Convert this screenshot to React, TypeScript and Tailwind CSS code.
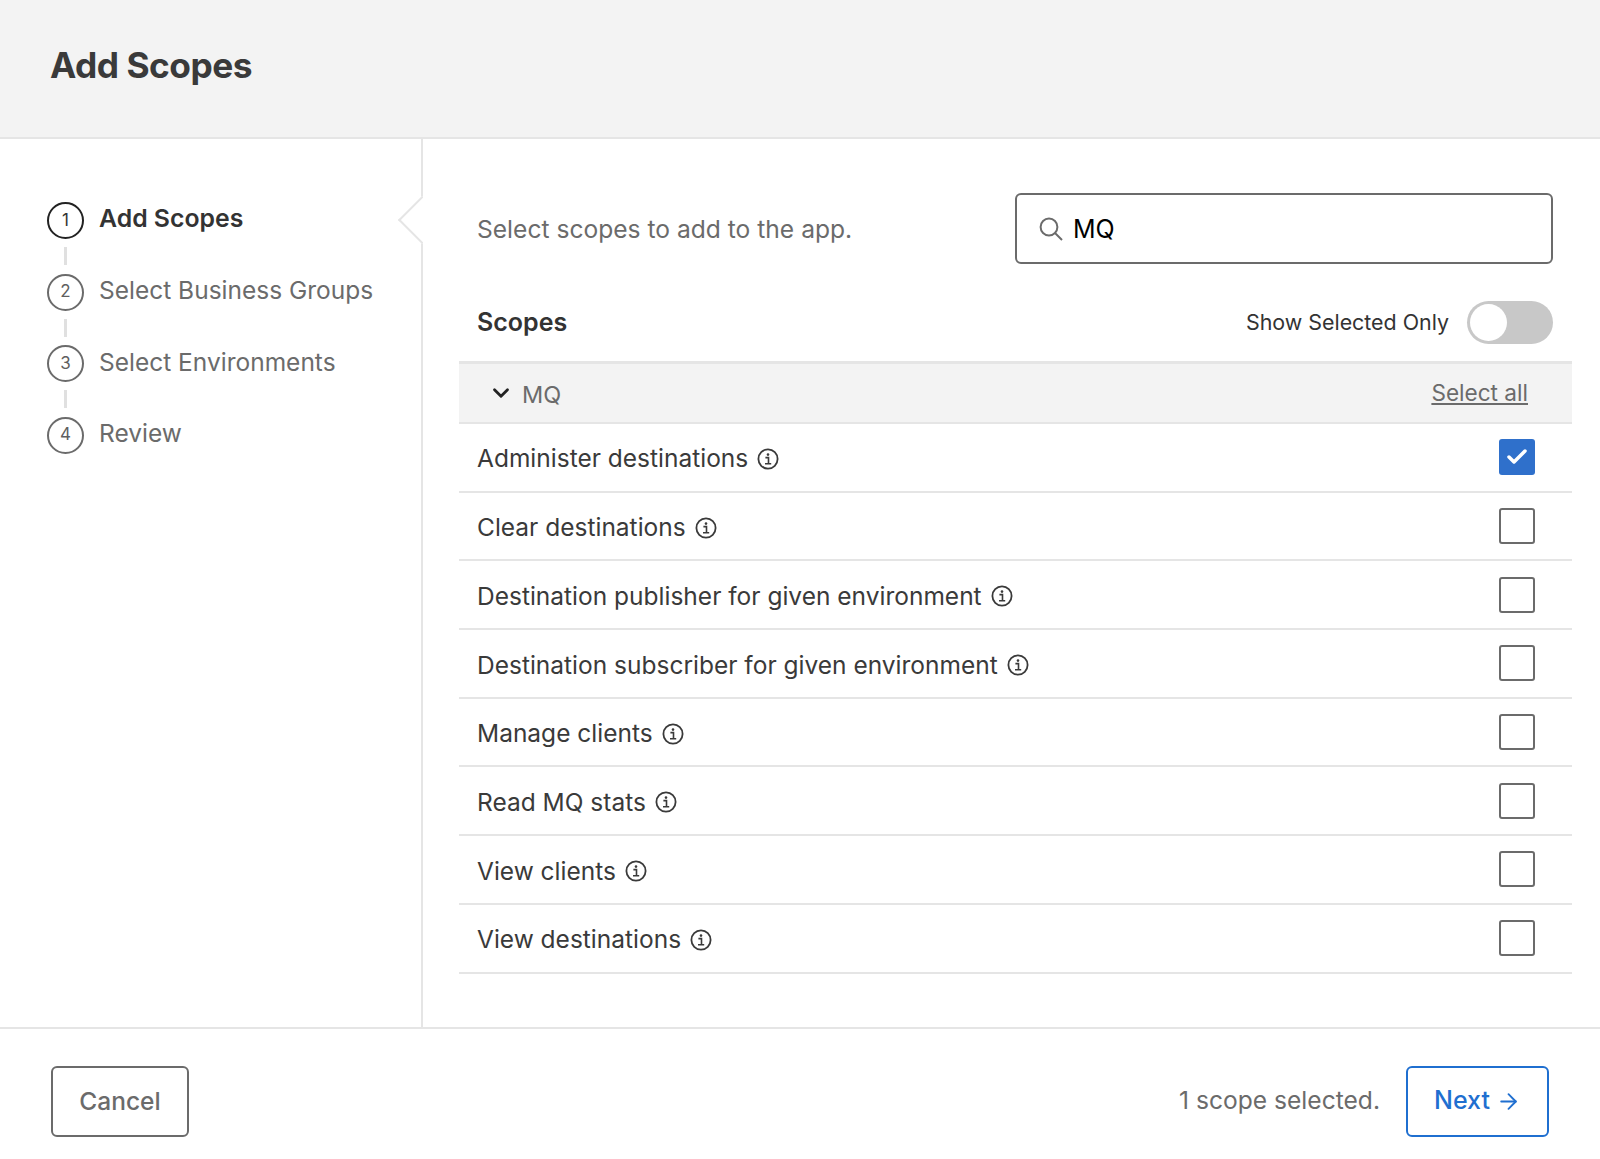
import React from 'react';
import { ChevronDown, ArrowRight, Check } from 'lucide-react';

const steps = [
  { n: 1, label: 'Add Scopes', active: true },
  { n: 2, label: 'Select Business Groups', active: false },
  { n: 3, label: 'Select Environments', active: false },
  { n: 4, label: 'Review', active: false }
];

const scopes = [
  { name: 'Administer destinations', checked: true },
  { name: 'Clear destinations', checked: false },
  { name: 'Destination publisher for given environment', checked: false },
  { name: 'Destination subscriber for given environment', checked: false },
  { name: 'Manage clients', checked: false },
  { name: 'Read MQ stats', checked: false },
  { name: 'View clients', checked: false },
  { name: 'View destinations', checked: false }
];

const InfoIcon = () => (
  <svg width="22" height="22" viewBox="0 0 22 22" fill="none" className="shrink-0 text-[#3a3a3a]">
    <circle cx="11" cy="11" r="9.6" stroke="currentColor" strokeWidth="1.8" />
    <circle cx="11" cy="6.6" r="1.3" fill="currentColor" />
    <path d="M8.4 9.6H11.5V15.4M8 15.7H14.2" stroke="currentColor" strokeWidth="1.6" />
  </svg>
);

const SearchIcon = () => (
  <svg width="24" height="24" viewBox="0 0 24 24" fill="none" className="shrink-0 text-[#6b6b6b]">
    <circle cx="10" cy="10" r="8.4" stroke="currentColor" strokeWidth="2" />
    <path d="M16 16L23 23" stroke="currentColor" strokeWidth="2" />
  </svg>
);

export default function App() {
  return (
    <div className="w-[1600px] h-[1159px] flex flex-col bg-white font-['Inter',sans-serif] overflow-hidden">
      <header className="h-[139px] shrink-0 bg-[#f3f3f3] border-b-2 border-[#e5e5e5] flex items-center pl-[50px] pb-[4px]">
        <h1 className="text-[35.3px] font-bold text-[#3a3a3a] tracking-[-0.5px]">Add Scopes</h1>
      </header>

      <div className="flex-1 flex min-h-0">
        {/* Steps */}
        <aside className="relative w-[423px] shrink-0 border-r-2 border-[#e5e5e5] pl-[47px] pt-[63px]">
          <div className="absolute right-[-2px] top-[57px] w-[26px] h-[48px] overflow-hidden">
            <div className="absolute left-[8px] top-[7px] w-[34px] h-[34px] rotate-45 bg-white border-l-2 border-b-2 border-[#e5e5e5]" />
          </div>
          {steps.map((step, i) => (
            <div key={step.n}>
              <div className="flex items-center gap-[15px] h-[37px]">
                <div
                  className={`w-[37px] h-[37px] rounded-full border-2 flex items-center justify-center text-[17px] ${
                    step.active ? 'border-[#222] text-[#333]' : 'border-[#6b6b6b] text-[#5f5f5f]'
                  }`}
                >
                  {step.n}
                </div>
                <span
                  className={
                    step.active
                      ? '-mt-[4px] text-[24.8px] font-semibold text-[#333]'
                      : '-mt-[3px] text-[24.5px] text-[#6b6b6b]'
                  }
                >
                  {step.label}
                </span>
              </div>
              {i < steps.length - 1 && (
                <div className="w-[3px] h-[18px] ml-[17px] my-[8.25px] bg-[#e0e0e0]" />
              )}
            </div>
          ))}
        </aside>

        {/* Scope picker */}
        <main className="flex-1 pl-[36px] pr-[28px] pt-[54px]">
          <div className="flex items-center justify-between pl-[18px] pr-[19px] h-[71px]">
            <span className="text-[24.6px] text-[#6b6b6b] mt-[1px]">Select scopes to add to the app.</span>
            <div className="w-[538px] h-[71px] border-2 border-[#6b6b6b] rounded-[6px] flex items-center pl-[22px] gap-[10px]">
              <SearchIcon />
              <span className="text-[25px] text-black mt-[2px]">MQ</span>
            </div>
          </div>

          <div className="flex items-center justify-between pl-[18px] pr-[19px] h-[43px] mt-[37px]">
            <span className="text-[25px] font-semibold text-[#333] mt-[1px]">Scopes</span>
            <div className="flex items-center gap-[18px]">
              <span className="text-[21.4px] text-[#333]">Show Selected Only</span>
              <div className="w-[86px] h-[43px] rounded-full bg-[#c8c8c8] flex items-center pl-[3px]">
                <div className="w-[37px] h-[37px] rounded-full bg-white" />
              </div>
            </div>
          </div>

          <div className="mt-[17px] h-[63px] bg-[#f3f3f3] border-t-[3px] border-b-2 border-[#e5e5e5] flex items-center justify-between pl-[29px] pr-[44px]">
            <div className="flex items-center gap-[8px]">
              <ChevronDown className="w-[26px] h-[26px] text-[#222]" strokeWidth={2.6} />
              <span className="text-[23.5px] text-[#6b6b6b] mt-[3px]">MQ</span>
            </div>
            <span className="text-[22.6px] text-[#6b6b6b] underline">Select all</span>
          </div>

          {scopes.map(scope => (
            <div
              key={scope.name}
              className="h-[68.7px] border-b-2 border-[#e5e5e5] flex items-center justify-between pl-[18px] pr-[37px]"
            >
              <div className="flex items-center gap-[9px] pt-[3px]">
                <span className="text-[24.5px] text-[#3a3a3a]">{scope.name}</span>
                <InfoIcon />
              </div>
              {scope.checked ? (
                <div className="w-[36px] h-[36px] rounded-[3px] bg-[#2f70cb] flex items-center justify-center">
                  <Check className="w-[24px] h-[24px] text-white" strokeWidth={3.5} />
                </div>
              ) : (
                <div className="w-[36px] h-[36px] rounded-[3px] border-2 border-[#6b6b6b]" />
              )}
            </div>
          ))}
        </main>
      </div>

      <footer className="h-[132px] shrink-0 border-t-2 border-[#e5e5e5] flex items-center justify-between pl-[51px] pr-[51px] pt-[14px]">
        <button className="w-[138px] h-[71px] border-2 border-[#6b6b6b] rounded-[6px] text-[24.5px] font-medium text-[#6b6b6b]">
          Cancel
        </button>
        <div className="flex items-center gap-[26px]">
          <span className="text-[24.6px] text-[#6b6b6b] -mt-[2px]">1 scope selected.</span>
          <button className="w-[143px] h-[71px] border-2 border-[#1f6fd0] rounded-[6px] text-[25px] font-medium text-[#1f6fd0] flex items-center justify-center gap-[6px]">
            Next
            <ArrowRight className="w-[25px] h-[25px]" strokeWidth={1.8} />
          </button>
        </div>
      </footer>
    </div>
  );
}
